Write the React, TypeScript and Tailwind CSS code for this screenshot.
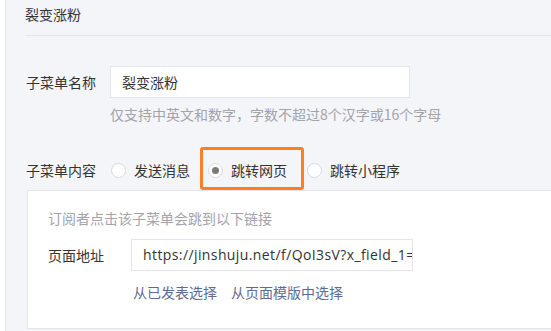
import React from "react";

function Radio({ checked }: { checked?: boolean }) {
  return (
    <span className="flex h-[15px] w-[15px] shrink-0 items-center justify-center rounded-full border border-[#d9d9de] bg-white">
      {checked ? <span className="h-[7px] w-[7px] rounded-full bg-[#7a7a7a]" /> : null}
    </span>
  );
}

export default function App() {
  return (
    <div
      className="flex h-[331px] w-[551px] overflow-hidden bg-white text-[14px] text-[#333]"
      style={{ fontFamily: '"Noto Sans CJK SC", "Noto Sans", sans-serif' }}
    >
      <div className="w-[5px] shrink-0 bg-white" />
      <div className="flex min-w-0 flex-1 flex-col border-l border-[#e4e6ea] bg-[#f4f5f9] pl-[19px]">
        <div className="h-[36px] shrink-0 border-b border-[#e3e5e9] pt-[4px] leading-[20px]">
          裂变涨粉
        </div>

        <div className="mt-[30px] flex items-center pl-[1px]">
          <div className="w-[84px] shrink-0 leading-[20px]">子菜单名称</div>
          <div className="flex h-[32px] w-[300px] items-center border border-[#e3e5ea] bg-white px-[11px] leading-[20px]">
            裂变涨粉
          </div>
        </div>
        <div className="ml-[85px] mt-[6px] leading-[20px] text-[#a3a3a8]">
          仅支持中英文和数字，字数不超过8个汉字或16个字母
        </div>

        <div className="mt-[23px] flex h-[43px] shrink-0 items-center pl-[1px] pt-[3px]">
          <div className="w-[85px] shrink-0 leading-[20px]">子菜单内容</div>
          <div className="flex items-center gap-[8px]">
            <Radio />
            <span className="leading-[20px]">发送消息</span>
          </div>
          <div className="relative ml-[18px] flex h-full items-center gap-[8px]">
            <Radio checked />
            <span className="leading-[20px]">跳转网页</span>
            <div className="pointer-events-none absolute bottom-0 left-[-8px] right-[-17px] top-[-3px] rounded-[3px] border-[3px] border-[#ff7f22]" />
          </div>
          <div className="ml-[20px] flex items-center gap-[8px]">
            <Radio />
            <span className="leading-[20px]">跳转小程序</span>
          </div>
        </div>

        <div className="ml-[2px] mr-[-4px] flex h-[139px] shrink-0 flex-col border border-[#e3e5ea] bg-white pl-[20px] pt-[17px]">
          <div className="leading-[20px] text-[#a3a3a8]">订阅者点击该子菜单会跳到以下链接</div>
          <div className="mt-[11px] flex items-center">
            <div className="w-[83px] shrink-0 leading-[20px]">页面地址</div>
            <div className="flex h-[32px] w-[282px] items-center overflow-hidden border border-[#e3e5ea] bg-white pl-[11px]">
              <span
                className="whitespace-nowrap leading-[20px] tracking-[0.4px]"
                style={{ fontFamily: '"Open Sans", "Noto Sans CJK SC", sans-serif' }}
              >
                https://jinshuju.net/f/QoI3sV?x_field_1=
              </span>
            </div>
          </div>
          <div className="ml-[85px] mt-[11px] flex gap-[14px] leading-[20px] text-[#5d6c94]">
            <span>从已发表选择</span>
            <span>从页面模版中选择</span>
          </div>
        </div>
      </div>
    </div>
  );
}
